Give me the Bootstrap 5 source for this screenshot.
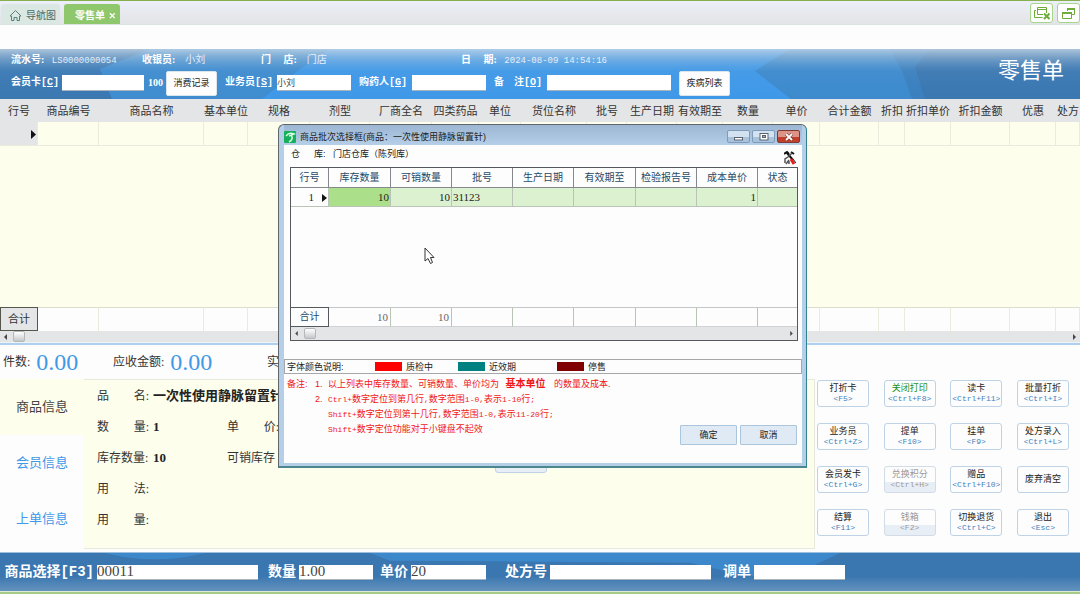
<!DOCTYPE html>
<html lang="zh-CN">
<head>
<meta charset="utf-8">
<meta name="viewport" content="width=device-width, initial-scale=1">
<title>零售单</title>
<link href="https://cdn.jsdelivr.net/npm/bootstrap@5.3.0/dist/css/bootstrap.min.css" rel="stylesheet">
<style>
  body { font-family: "Liberation Serif", "Noto Sans CJK SC", sans-serif; font-size: 11px; line-height: 14px; color: #333; background: #fdfdfd; overflow-x: hidden; }
  input { min-width: 0; padding: 0; border: 0; border-radius: 0; background: #fff; color: #444; }
  .sans { font-family: "Liberation Sans", "Noto Sans CJK SC", sans-serif; }

  /* tab strip */
  .tabstrip { height: 25px; border-top: 1px solid #86b050; background: linear-gradient(#eceff8, #e2e4e6); border-bottom: 1px solid #dde3e3; padding-left: 1px; }
  .page-tab { height: 20px; font-size: 10px; text-decoration: none; border-radius: 3px 3px 0 0; }
  .tab-home { width: 59px; padding-top: 3px; background: #dae7e3; color: #4d6a66; }
  .tab-open { width: 56px; padding-top: 3px; background: #8fc86c; color: #fff; font-weight: 700; }
  .strip-tools { padding-top: 2px; }
  .tool-btn { width: 23px; height: 20px; padding: 0; background: #fff; border: 1px solid #a4d68c; border-radius: 3px; }
  .page-gap { height: 24px; }

  /* blue form header */
  .form-head { height: 50px; background: #4099e8; color: #fff; }
  .head-art { width: 100%; height: 100%; }
  .info-line { height: 22px; padding-left: 11px; font-size: 10px; color: #e4effb; }
  .info-line b, .field-line b { font-size: 10px; color: #fff; }
  .field-line { height: 24px; padding-left: 11px; font-size: 10px; }
  .field-line label { font-family: "Liberation Mono", "Noto Sans CJK SC", monospace; font-size: 10px; font-weight: 700; white-space: nowrap; }
  .field-line input { height: 16px; font-size: 9px; border-bottom: 1px solid #a9b3bd; }
  .head-btn { width: 51px; height: 25px; padding: 0; background: #fdfdfd; border: 1px solid #dbe5ee; border-radius: 2px; font-size: 9px; color: #222; }
  .form-title { font-size: 22px; line-height: 28px; right: 16px; top: 8px; margin: 0; font-weight: 400; }
  .mono { font-family: "Liberation Mono", "Noto Sans CJK SC", monospace; font-size: 9px; }

  /* item table */
  .item-table { table-layout: fixed; width: 100%; border-collapse: separate; border-spacing: 0; }
  .item-table th { height: 23px; padding: 0; background: #e4e5e7; font-weight: 400; text-align: center; white-space: nowrap; overflow: hidden; }
  .item-table th:last-child { text-align: left; padding-left: 1px; }
  .item-table td { padding: 0; border-right: 1px solid #e9ebdd; overflow: hidden; }
  .item-table .row-new td { height: 24px; background: #fdfeec; border-bottom: 1px solid #eaebdf; }
  .item-table .row-new td:first-child { background: #e4e5e7; text-align: right; padding-right: 1px; }
  .item-table .row-space td { height: 161px; background: #fdfeec; border: 0; }
  .item-table .row-sum td { height: 24px; background: #fdfdfd; border-top: 1px solid #dcddcf; }
  .item-table .row-sum td:first-child { border: 1px solid #55564c; background: #e4e5e7; text-align: center; }
  .scroll-track { background: #e4e5e7; }
  .scroll-main { height: 12px; border-bottom: 1px solid #eef3f8; }
  .thumb { width: 12px; height: 11px; border: 1px solid #b5b7ba; border-radius: 2px; background: linear-gradient(#fff, #c5c8cb); }
  .scroll-main .thumb { margin-left: 6px; }
  .scroll-small .thumb { margin-left: 6px; }

  /* totals line and details */
  .stats { height: 36px; border-top: 2px solid #aecfee; font-size: 12px; }
  .stats strong { font-size: 24px; line-height: 30px; font-weight: 400; color: #4099e8; }
  .stat-first { width: 113px; padding-left: 3px; }
  .lower { height: 170px; }
  .side { width: 84px; }
  .side a { height: 56px; font-size: 13px; color: #4099e8; text-decoration: none; }
  .side a.current { background: #fdfeec; color: #444; }
  .detail { background: #fdfeec; border: solid #e7e9dc; border-width: 1px 1px 1px 0; font-size: 12px; padding-left: 13px; }
  .detail-line { height: 31px; }
  .spread { width: 52px; }
  .col-one { width: 130px; white-space: nowrap; }
  .col-two { width: 268px; }
  .detail b { font-size: 13px; color: #222; margin-left: 4px; white-space: nowrap; }
  .keys { width: 265px; padding: 1px 11px 0 2px; grid-template-columns: repeat(4, 52px); justify-content: space-between; align-content: start; row-gap: 16px; }
  .key-btn { height: 27px; padding: 0; font-size: 9px; line-height: 11px; color: #222; background: #fdfdfd; border: 1px solid #bfd3e6; border-radius: 3px; white-space: nowrap; }
  .key-btn small { display: block; font: 8px/10px "Liberation Mono", monospace; color: #3f80bd; }
  .key-btn:disabled { color: #999; background: linear-gradient(#fdfdfd 60%, #e8eef6 61%); border-color: #d3dce6; }
  .key-btn:disabled small { color: #999; }
  .key-on { color: #189018; }
  .peek { width: 52px; background: #e8eef6; }

  /* bottom bar */
  .foot { height: 39px; margin-top: 3px; border-top: 1px solid #9ec0de; background: #3a76af; color: #fff; }
  .foot label { font-family: "Liberation Mono", "Noto Sans CJK SC", monospace; font-size: 14px; font-weight: 700; line-height: 18px; text-align: right; padding-right: 3px; white-space: nowrap; }
  .foot input { height: 15px; font-size: 15px; border-bottom: 1px solid #a9b3bd; }
  .foot-line { height: 3px; background: #a6cb88; border-top: 1px solid #dcead2; }

  /* batch picker window */
  .picker { left: 278px; top: 124px; width: 529px; height: 344px; padding: 0 4px 3px 5px; background: #b5cfe9; border: 1px solid #5f666e; border-right-color: #33838f; border-bottom: 2px solid #4c8790; border-radius: 6px 6px 0 0; color: #222; font-size: 9px; }
  .picker-bar { height: 20px; padding-top: 3px; background: linear-gradient(#9cb6d3, #b5cfe9); }
  .win-group { gap: 2px; padding-right: 2px; }
  .win-btn { width: 23px; height: 13px; padding: 0; border: 1px solid #7f9bb9; border-radius: 2px; background: linear-gradient(#d2e2f1 50%, #a9c3dd 51%); line-height: 0; }
  .win-close { border-color: #7d3a35; background: linear-gradient(#dd9486 50%, #c0402b 51%); }
  .picker-body { flex: 1; background: #fdfdfd; }
  .store { height: 22px; padding: 2px 6px 2px 7px; }
  .batch-box { margin: 0 4px 0 6px; border: 1px solid #55595e; }
  .batch { table-layout: fixed; width: 100%; border-collapse: separate; border-spacing: 0; }
  .batch th { height: 20px; padding: 0; font-size: 10px; font-weight: 400; color: #1d4a68; text-align: center; border-right: 1px solid #85898d; border-bottom: 1px solid #85898d; }
  .batch td { height: 19px; padding: 0 1px; font-size: 11px; border-right: 1px solid #b9c4b7; text-align: right; }
  .batch th:last-child, .batch td:last-child { border-right: 0; }
  .batch .hit td { background: #dcf1d0; border-bottom: 1px solid #b9c4b7; }
  .batch .hit td:first-child { background: #fdfdfd; }
  .batch .hit td.chosen { background: #abdf8a; }
  .batch .void td { height: 100px; border: 0; }
  .batch .sum td { height: 20px; padding-right: 2px; border-top: 1px solid #c4c6c8; border-bottom: 1px solid #d0d2d4; color: #666; }
  .batch .sum td:first-child { padding: 0; border-color: #55595e; font-size: 10px; text-align: center; color: #1d4a68; }
  .scroll-small { height: 13px; }
  .legend-line { height: 15px; margin-top: 18px; border: 1px solid #a5a7a9; padding-left: 2px; }
  .swatch { width: 27px; height: 9px; margin-right: 4px; }
  .notes { color: #f01818; padding: 3px 3px 0; line-height: 15px; display: grid; grid-template-columns: 28px 13px 1fr; grid-auto-rows: 15px; white-space: nowrap; }
  .notes b { font-size: 10px; line-height: 10px; margin: 0 6px 0 4px; }
  .latin { font-family: "Liberation Mono", monospace; font-size: 8px; line-height: 8px; }
  .answers { margin-top: -12px; padding-right: 5px; gap: 3px; }
  .ask-btn { width: 57px; height: 20px; padding: 0; font-size: 9px; background: #dfeaf5; border: 1px solid #abc5dd; border-radius: 1px; color: #222; }
  .pointer { left: 424px; top: 247px; }
</style>
</head>
<body class="position-relative">

<nav class="tabstrip d-flex align-items-end">
  <a href="#" class="page-tab tab-home d-flex align-items-center text-nowrap sans">
    <svg class="ms-2 me-1" width="13" height="13" viewBox="0 0 13 13" fill="none" stroke="#5a8078"><path d="M1 7 6.500 1.500 12 7H10.500V11.500H8V8.500H5V11.500H2.500V7Z"/></svg>导航图</a>
  <a href="#" class="page-tab tab-open ms-1 d-flex align-items-center justify-content-end pe-1 text-nowrap sans">零售单
    <svg class="ms-1" width="7" height="7" viewBox="0 0 8 8" stroke="#fff" stroke-width="1.500"><path d="M1 1.500 6.500 7M6.500 1.500 1 7"/></svg></a>
  <div class="strip-tools ms-auto d-flex gap-1 align-self-start">
    <button class="tool-btn" aria-label="关闭全部"><svg class="d-block mx-auto" width="18" height="16" viewBox="0 0 18 16" fill="none" stroke="#6fab3b"><path d="M4.500 9.500V2.500H13.500V8M4.500 4.500H13.500M3 5.500H1.500V12.500H9.500M4.500 9.500H10"/><path d="M11 8.500 16.500 14M16.500 8.500 11 14" stroke-width="2"/></svg></button>
    <button class="tool-btn" aria-label="还原窗口"><svg class="d-block mx-auto" width="18" height="16" viewBox="0 0 18 16" fill="none" stroke="#6fab3b"><path d="M7.500 6V3.500H14.500V9.500H12M2.500 7.500H11.500V13.500H2.500Z"/><path d="M2 8H12M7 4H15" stroke-width="2"/></svg></button>
  </div>
</nav>
<div class="page-gap"></div>

<header class="form-head position-relative">
  <svg class="head-art position-absolute top-0 start-0" viewBox="0 0 1080 50" preserveAspectRatio="none" aria-hidden="true">
    <defs><linearGradient id="sheen" x2="0" y2="1"><stop offset="0" stop-color="#d3dfea" stop-opacity=".75"/><stop offset=".16" stop-color="#b9cde0" stop-opacity=".5"/><stop offset=".45" stop-color="#7fb0dd" stop-opacity=".1"/><stop offset="1" stop-color="#4099e8" stop-opacity="0"/></linearGradient></defs>
    <path fill="#3f8ccf" d="M0 0H330L300 20 262 50H0Z"/>
    <path fill="#3b78b2" d="M0 0H150L100 20 112 50H0Z"/>
    <path fill="#3d8acd" d="M790 0H1080V50H791L755 22Z"/>
    <path fill="#3b80be" d="M890 0H940V50H912L902 22Z"/>
    <path fill="#3b77b0" d="M930 0H1080V50H925L915 18Z"/>
    <path fill="url(#sheen)" d="M0 0H1080V50H0Z"/>
  </svg>
  <div class="position-relative">
    <div class="info-line d-flex align-items-center text-nowrap">
      <div style="width:131px"><b>流水号: </b>&nbsp;&nbsp;<span class="mono">LS0000000054</span></div>
      <div style="width:119px"><b>收银员:</b>&nbsp;&nbsp;&nbsp; 小刘</div>
      <div style="width:200px"><b>门&emsp;&nbsp;店:</b>&nbsp;&nbsp;&nbsp; 门店</div>
      <div><b>日&emsp;&nbsp;期:</b>&nbsp;&nbsp;&nbsp;<span class="mono">2024-08-09 14:54:16</span></div>
    </div>
    <div class="field-line d-flex align-items-center">
      <label for="card" style="width:51px">会员卡[<u>C</u>]</label><input id="card" style="width:82px">
      <b class="ms-1" style="width:18px">100</b>
      <button class="head-btn sans">消费记录</button>
      <label for="clerk" class="ms-2" style="width:52px">业务员[<u>S</u>]</label><input id="clerk" value="小刘" style="width:74px">
      <label for="buyer" class="ms-2" style="width:53px">购药人[<u>G</u>]</label><input id="buyer" style="width:74px">
      <label for="memo" class="ms-2" style="width:53px">备&emsp;注[<u>O</u>]</label><input id="memo" style="width:124px">
      <button class="head-btn ms-2 sans">疾病列表</button>
    </div>
  </div>
  <h1 class="form-title position-absolute">零售单</h1>
</header>

<main>
  <table class="item-table">
    <colgroup><col style="width:38px"><col style="width:61px"><col style="width:105px"><col style="width:44px"><col style="width:62px"><col style="width:60px"><col style="width:62px"><col style="width:47px"><col style="width:42px"><col style="width:66px"><col style="width:40px"><col style="width:50px"><col style="width:46px"><col style="width:50px"><col style="width:47px"><col style="width:59px"><col style="width:26px"><col style="width:46px"><col style="width:59px"><col style="width:46px"><col></colgroup>
    <thead><tr><th>行号</th><th>商品编号</th><th>商品名称</th><th>基本单位</th><th>规格</th><th>剂型</th><th>厂商全名</th><th>四类药品</th><th>单位</th><th>货位名称</th><th>批号</th><th>生产日期</th><th>有效期至</th><th>数量</th><th>单价</th><th>合计金额</th><th>折扣</th><th>折扣单价</th><th>折扣金额</th><th>优惠</th><th>处方</th></tr></thead>
    <tbody>
      <tr class="row-new"><td><svg width="5" height="9" viewBox="0 0 5 9"><path d="M0 0 5 4.500 0 9Z" fill="#111"/></svg></td><td></td><td></td><td></td><td></td><td></td><td></td><td></td><td></td><td></td><td></td><td></td><td></td><td></td><td></td><td></td><td></td><td></td><td></td><td></td><td></td></tr>
      <tr class="row-space"><td colspan="21"></td></tr>
      <tr class="row-sum"><td>合计</td><td></td><td></td><td></td><td></td><td></td><td></td><td></td><td></td><td></td><td></td><td></td><td></td><td></td><td></td><td></td><td></td><td></td><td></td><td></td><td></td></tr>
    </tbody>
  </table>
  <div class="scroll-track scroll-main d-flex align-items-center px-1">
    <svg width="3" height="6" viewBox="0 0 3 6"><path d="M3 0V6L0 3Z" fill="#444"/></svg>
    <span class="thumb me-auto"></span>
    <svg width="3" height="6" viewBox="0 0 3 6"><path d="M0 0V6L3 3Z" fill="#444"/></svg>
  </div>

  <div class="stats d-flex align-items-center text-nowrap">
    <div class="stat-first d-flex align-items-center">件数:&nbsp;&nbsp;<strong>0.00</strong></div>
    <div class="d-flex align-items-center" style="width:154px">应收金额:&nbsp;&nbsp;<strong>0.00</strong></div>
    <div>实</div>
  </div>

  <div class="lower d-flex">
    <nav class="side d-flex flex-column">
      <a href="#" class="current d-flex align-items-center justify-content-center">商品信息</a>
      <a href="#" class="d-flex align-items-center justify-content-center">会员信息</a>
      <a href="#" class="d-flex align-items-center justify-content-center">上单信息</a>
    </nav>
    <section class="detail flex-grow-1">
      <div class="detail-line d-flex align-items-center"><div class="d-flex"><span class="spread d-flex justify-content-between"><span>品</span><span>名:</span></span><b>一次性使用静脉留置针</b></div></div>
      <div class="detail-line d-flex align-items-center"><div class="col-one d-flex"><span class="spread d-flex justify-content-between"><span>数</span><span>量:</span></span><b>1</b></div><span class="spread d-flex justify-content-between"><span>单</span><span>价:</span></span></div>
      <div class="detail-line d-flex align-items-center"><div class="col-one d-flex"><span class="spread">库存数量:</span><b>10</b></div><div class="col-two">可销库存</div><button class="key-btn peek align-self-end" aria-label="批次"></button></div>
      <div class="detail-line d-flex align-items-center"><span class="spread d-flex justify-content-between"><span>用</span><span>法:</span></span></div>
      <div class="detail-line d-flex align-items-center"><span class="spread d-flex justify-content-between"><span>用</span><span>量:</span></span></div>
    </section>
    <section class="keys d-grid sans">
      <button class="key-btn">打折卡<small>&lt;F5&gt;</small></button>
      <button class="key-btn key-on">关闭打印<small>&lt;Ctrl+F8&gt;</small></button>
      <button class="key-btn">读卡<small>&lt;Ctrl+F11&gt;</small></button>
      <button class="key-btn">批量打折<small>&lt;Ctrl+I&gt;</small></button>
      <button class="key-btn">业务员<small>&lt;Ctrl+Z&gt;</small></button>
      <button class="key-btn">提单<small>&lt;F10&gt;</small></button>
      <button class="key-btn">挂单<small>&lt;F9&gt;</small></button>
      <button class="key-btn">处方录入<small>&lt;Ctrl+L&gt;</small></button>
      <button class="key-btn">会员发卡<small>&lt;Ctrl+G&gt;</small></button>
      <button class="key-btn" disabled>兑换积分<small>&lt;Ctrl+H&gt;</small></button>
      <button class="key-btn">赠品<small>&lt;Ctrl+F10&gt;</small></button>
      <button class="key-btn">废弃清空</button>
      <button class="key-btn">结算<small>&lt;F11&gt;</small></button>
      <button class="key-btn" disabled>钱箱<small>&lt;F2&gt;</small></button>
      <button class="key-btn">切换退货<small>&lt;Ctrl+C&gt;</small></button>
      <button class="key-btn">退出<small>&lt;Esc&gt;</small></button>
    </section>
  </div>
</main>

<footer class="foot position-relative">
  <svg class="head-art position-absolute top-0 start-0" viewBox="0 0 1080 39" preserveAspectRatio="none" aria-hidden="true">
    <defs><linearGradient id="floor" x2="0" y2="1"><stop offset=".6" stop-color="#7fa6c8" stop-opacity="0"/><stop offset="1" stop-color="#7fa6c8" stop-opacity=".6"/></linearGradient></defs>
    <path fill="#3d88cb" d="M105 0H205Q155 13 105 0ZM370 0H840L815 12Q790 28 740 22L690 10 390 8Z"/>
    <path fill="url(#floor)" d="M0 0H1080V39H0Z"/>
  </svg>
  <div class="position-relative d-flex align-items-center h-100">
    <label for="pick" style="width:97px">商品选择[F3]</label><input id="pick" value="00011" style="width:161px">
    <label for="qty" style="width:41px">数量</label><input id="qty" value="1.00" style="width:74px">
    <label for="price" style="width:38px">单价</label><input id="price" value="20" style="width:75px">
    <label for="rx" style="width:64px">处方号</label><input id="rx" style="width:161px">
    <label for="recall" style="width:43px">调单</label><input id="recall" style="width:91px">
  </div>
</footer>
<div class="foot-line"></div>

<section class="picker position-absolute d-flex flex-column" role="dialog" aria-labelledby="picker-title">
  <div class="picker-bar d-flex align-items-center">
    <svg width="12" height="12" viewBox="0 0 12 12"><rect width="12" height="12" rx="1" fill="#16b05a"/><path d="M2 5Q5 1 10 3L5 5M7 4Q10 8 5 11" stroke="#d8ffe4" stroke-width="1.500" fill="none"/></svg>
    <span id="picker-title" class="ms-1 sans flex-grow-1">商品批次选择框(商品：一次性使用静脉留置针)</span>
    <div class="win-group d-flex">
      <button class="win-btn" aria-label="最小化"><svg width="10" height="8" viewBox="0 0 10 8"><rect x=".5" y="4.500" width="8" height="2.500" fill="#fff" stroke="#5a6470"/></svg></button>
      <button class="win-btn" aria-label="最大化"><svg width="10" height="8" viewBox="0 0 10 8"><rect x="1" y=".5" width="8" height="6.500" fill="#fff" stroke="#5a6470"/><rect x="3.500" y="2.500" width="3" height="2" fill="#9ab" stroke="#5a6470"/></svg></button>
      <button class="win-btn win-close" aria-label="关闭"><svg width="10" height="8" viewBox="0 0 10 8"><path d="M2 1 8 7M8 1 2 7" stroke="#6a3030" stroke-width="3"/><path d="M2 1 8 7M8 1 2 7" stroke="#fff" stroke-width="1.800"/></svg></button>
    </div>
  </div>
  <div class="picker-body">
    <div class="store d-flex justify-content-between">
      <span class="sans">仓&emsp;&nbsp;&nbsp;库:&nbsp;&nbsp; 门店仓库（陈列库）</span>
      <svg class="align-self-end" width="12" height="14" viewBox="0 0 12 14" fill="none"><path d="M0 3 3 1 5 3M7 1 10 3M3 2 9 9" stroke="#111" stroke-width="2"/><path d="M1 12V8L4 6 8 2M2 13 5 9M5 13V10" stroke="#555" stroke-width="1.500"/><path d="M7 8 10 13" stroke="#e02020" stroke-width="3"/><path d="M9 8 12 12" stroke="#222"/></svg>
    </div>
    <div class="batch-box">
      <table class="batch">
        <colgroup><col style="width:38px"><col style="width:62px"><col style="width:61px"><col style="width:61px"><col style="width:61px"><col style="width:62px"><col style="width:61px"><col style="width:61px"><col></colgroup>
        <thead><tr><th>行号</th><th>库存数量</th><th>可销数量</th><th>批号</th><th>生产日期</th><th>有效期至</th><th>检验报告号</th><th>成本单价</th><th>状态</th></tr></thead>
        <tbody>
          <tr class="hit"><td><span class="me-2">1</span><svg width="5" height="8" viewBox="0 0 5 8"><path d="M0 0 5 4 0 8Z" fill="#111"/></svg></td><td class="chosen">10</td><td>10</td><td class="text-start">31123</td><td></td><td></td><td></td><td>1</td><td></td></tr>
          <tr class="void"><td colspan="9"></td></tr>
          <tr class="sum"><td>合计</td><td>10</td><td>10</td><td></td><td></td><td></td><td></td><td></td><td></td></tr>
        </tbody>
      </table>
      <div class="scroll-track scroll-small d-flex align-items-center px-1">
        <svg width="3" height="5" viewBox="0 0 3 6"><path d="M3 0V6L0 3Z" fill="#444"/></svg>
        <span class="thumb me-auto"></span>
        <svg width="3" height="5" viewBox="0 0 3 6"><path d="M0 0V6L3 3Z" fill="#444"/></svg>
      </div>
    </div>
    <div class="legend-line d-flex align-items-center sans">
      <span style="width:88px">字体颜色说明:</span>
      <span class="swatch" style="background:#f00"></span><span style="width:52px">质检中</span>
      <span class="swatch" style="background:#008080"></span><span style="width:68px">近效期</span>
      <span class="swatch" style="background:#800000"></span><span>停售</span>
    </div>
    <div class="notes sans">
      <span>备注:</span><span>1.</span><span>以上列表中库存数量、可销数量、单价均为 <b>基本单位</b> 的数量及成本.</span>
      <span></span><span>2.</span><span><span class="latin">Ctrl+</span>数字定位到第几行<span class="latin">,</span>数字范围<span class="latin">1-0,</span>表示<span class="latin">1-10</span>行<span class="latin">;</span></span>
      <span></span><span></span><span><span class="latin">Shift+</span>数字定位到第十几行<span class="latin">,</span>数字范围<span class="latin">1-0,</span>表示<span class="latin">11-20</span>行<span class="latin">;</span></span>
      <span></span><span></span><span><span class="latin">Shift+</span>数字定位功能对于小键盘不起效</span>
    </div>
    <div class="answers d-flex justify-content-end sans">
      <button class="ask-btn">确定</button><button class="ask-btn">取消</button>
    </div>
  </div>
</section>
<svg class="pointer position-absolute" width="11" height="18" viewBox="0 0 11 18"><path d="M1 1V14L4 11.500 6.500 16.500 8.500 15.500 6.500 10.500H10Z" fill="#fff" stroke="#333"/></svg>

<script src="https://cdn.jsdelivr.net/npm/bootstrap@5.3.0/dist/js/bootstrap.bundle.min.js"></script>
</body>
</html>
